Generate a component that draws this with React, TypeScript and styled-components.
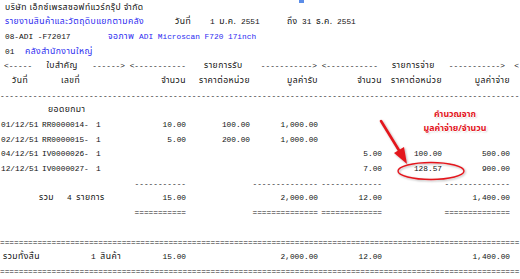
import React from 'react';
import styled, { createGlobalStyle } from 'styled-components';

const Global = createGlobalStyle`
  html, body { margin: 0; padding: 0; background: #ffffff; }
  body { width: 520px; height: 279px; overflow: hidden; }
`;

const Page = styled.div`
  position: relative;
  width: 520px;
  height: 279px;
  overflow: hidden;
  box-sizing: border-box;
  padding-top: 0.5px;
  font-family: "Liberation Mono", "Noto Sans Thai", "Loma", "Garuda", monospace;
  font-size: 7.8px;
  color: #111111;
`;

const Th = styled.span`
  font-family: "Noto Sans Thai", "Loma", "Garuda", "Liberation Sans", sans-serif;
  font-size: 8.6px;
  letter-spacing: 0.45px;
`;

const Line = styled.div`
  height: 14.7px;
  line-height: 14.7px;
  white-space: pre;
  overflow: hidden;
`;

const FreeLine = styled(Line)<{ $cols: string; $pad?: number }>`
  display: grid;
  grid-template-columns: ${p => p.$cols};
  padding-left: ${p => p.$pad ?? 5}px;
`;

const ReportRow = styled(Line)`
  display: grid;
  grid-template-columns: 42px 54px 36px 54px 64px 68px 64px 60px 68px 10px;
`;

const Cell = styled.span<{ $right?: boolean; $pad?: number }>`
  display: block;
  text-align: ${p => (p.$right ? 'right' : 'left')};
  padding-left: ${p => (p.$right ? 0 : p.$pad ?? 0)}px;
  padding-right: ${p => (p.$right ? p.$pad ?? 0 : 0)}px;
`;

const LabelCell = styled.span<{ $cols: string; $pad: number }>`
  display: grid;
  grid-column: span 3;
  grid-template-columns: ${p => p.$cols};
  padding-left: ${p => p.$pad}px;
`;

const Blue = styled(Th)`
  color: #2b2bf0;
`;

const BlueMono = styled.span`
  color: #2b2bf0;
`;

const Segment = styled.span`
  display: flex;
  justify-content: space-between;
`;

const RuleCell = styled.span`
  display: block;
  text-align: right;
`;

const Marker = styled.div`
  position: absolute;
  left: 299px;
  top: 0;
  width: 5px;
  height: 3px;
  background: #5b8de8;
`;

const Callout = styled.div`
  position: absolute;
  left: 410px;
  top: 108px;
  width: 90px;
  text-align: center;
  font-family: "Noto Sans Thai", "Loma", "Garuda", "Liberation Sans", sans-serif;
  font-weight: bold;
  font-size: 8.8px;
  line-height: 14px;
  color: #e3161d;
  text-shadow: 1px 0 0 #fff, -1px 0 0 #fff, 0 1px 0 #fff, 0 -1px 0 #fff, 1px 1px 2px rgba(0,0,0,0.25);
`;

const Overlay = styled.svg`
  position: absolute;
  left: 0;
  top: 0;
  pointer-events: none;
`;

const dashes = (n: number) => '-'.repeat(n);
const eqs = (n: number) => '='.repeat(n);

type Row = [string, string, string, string, string, string, string, string, string];

const rows: Row[] = [
  ['01/12/51', 'RR0000014-', '1', '10.00', '100.00', '1,000.00', '', '', ''],
  ['02/12/51', 'RR0000015-', '1', '5.00', '200.00', '1,000.00', '', '', ''],
  ['04/12/51', 'IV0000026-', '1', '', '', '', '5.00', '100.00', '500.00'],
  ['12/12/51', 'IV0000027-', '1', '', '', '', '7.00', '128.57', '900.00'],
];

const NumCells: React.FC<{ v: React.ReactNode[] }> = ({ v }) => (
  <>
    {v.map((x, i) => (
      <Cell key={i} $right>{x}</Cell>
    ))}
  </>
);

const Rules: React.FC<{ ch: (n: number) => string }> = ({ ch }) => (
  <ReportRow>
    <Cell />
    <Cell />
    <Cell />
    <RuleCell>{ch(11)}</RuleCell>
    <Cell />
    <RuleCell>{ch(14)}</RuleCell>
    <RuleCell>{ch(13)}</RuleCell>
    <Cell />
    <RuleCell>{ch(14)}</RuleCell>
  </ReportRow>
);

export default function App() {
  return (
    <Page>
      <Global />
      <Marker />
      <FreeLine $cols="auto">
        <Th>บริษัท เอ็กซ์เพรสซอฟท์แวร์กรุ๊ป จำกัด</Th>
      </FreeLine>
      <FreeLine $cols="170px 35px 77px 15px auto">
        <Blue>รายงานสินค้าและวัตถุดิบแยกตามคลัง</Blue>
        <Th>วันที่</Th>
        <span>1 <Th>ม.ค.</Th> 2551</span>
        <Th>ถึง</Th>
        <span>31 <Th>ธ.ค.</Th> 2551</span>
      </FreeLine>
      <FreeLine $cols="103px auto">
        <span>08-ADI -F72017</span>
        <BlueMono><Th>จอภาพ</Th> ADI Microscan F720 17inch</BlueMono>
      </FreeLine>
      <FreeLine $cols="20px auto">
        <span>01</span>
        <Blue>คลังสำนักงานใหญ่</Blue>
      </FreeLine>
      <FreeLine $cols="121px 192px 188px auto" $pad={4}>
        <Segment>
          <span>{'<-----'}</span>
          <Th>ใบสำคัญ</Th>
          <span>{'------>'}</span>
        </Segment>
        <Segment>
          <span>{' <-----------'}</span>
          <Th>รายการรับ</Th>
          <span>{'----------->'}</span>
        </Segment>
        <Segment>
          <span>{' <-----------'}</span>
          <Th>รายการจ่าย</Th>
          <span>{'----------->'}</span>
        </Segment>
        <span>{'  <'}</span>
      </FreeLine>
      <ReportRow>
        <Cell $pad={12}><Th>วันที่</Th></Cell>
        <Cell $pad={19}><Th>เลขที่</Th></Cell>
        <Cell />
        <NumCells
          v={[
            <Th key="a">จำนวน</Th>,
            <Th key="b">ราคาต่อหน่วย</Th>,
            <Th key="c">มูลค่ารับ</Th>,
            <Th key="d">จำนวน</Th>,
            <Th key="e">ราคาต่อหน่วย</Th>,
            <Th key="f">มูลค่าจ่าย</Th>,
          ]}
        />
      </ReportRow>
      <Line>{dashes(111)}</Line>
      <ReportRow>
        <Cell />
        <Cell $pad={6}><Th>ยอดยกมา</Th></Cell>
      </ReportRow>
      {rows.map(r => (
        <ReportRow key={r[1]}>
          <Cell $pad={1}>{r[0]}</Cell>
          <Cell>{r[1]}</Cell>
          <Cell $pad={0}>{r[2]}</Cell>
          <NumCells v={r.slice(3)} />
        </ReportRow>
      ))}
      <Rules ch={dashes} />
      <ReportRow>
        <LabelCell $cols="28px auto" $pad={39}>
          <Th>รวม</Th>
          <span>4 <Th>รายการ</Th></span>
        </LabelCell>
        <NumCells v={['15.00', '', '2,000.00', '12.00', '', '1,400.00']} />
      </ReportRow>
      <Rules ch={eqs} />
      <Line />
      <Line>{eqs(111)}</Line>
      <ReportRow>
        <LabelCell $cols="88px auto" $pad={3}>
          <Th>รวมทั้งสิ้น</Th>
          <span>1 <Th>สินค้า</Th></span>
        </LabelCell>
        <NumCells v={['15.00', '', '2,000.00', '12.00', '', '1,400.00']} />
      </ReportRow>
      <Line>{eqs(111)}</Line>

      <Callout>
        <div>คำนวณจาก</div>
        <div>มูลค่าจ่าย/จำนวน</div>
      </Callout>
      <Overlay width="520" height="279" viewBox="0 0 520 279">
        <defs>
          <filter id="sh" x="-20%" y="-20%" width="140%" height="140%">
            <feDropShadow dx="1" dy="1" stdDeviation="0.8" floodColor="#000" floodOpacity="0.3" />
          </filter>
        </defs>
        <g filter="url(#sh)">
          <line x1="381" y1="121" x2="400" y2="152" stroke="#e3161d" strokeWidth="2.6" strokeLinecap="round" />
          <polygon points="407,164 394,153 404,147" fill="#e3161d" />
          <ellipse cx="431" cy="171" rx="33" ry="8.5" fill="none" stroke="#e3161d" strokeWidth="1.4" />
        </g>
      </Overlay>
    </Page>
  );
}
